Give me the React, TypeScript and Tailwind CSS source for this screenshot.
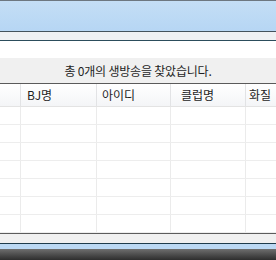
const columns = [
  { key: 'no', label: '', width: 'w-[21px]', pad: 'pl-[5px]' },
  { key: 'bj', label: 'BJ명', width: 'w-[76px]', pad: 'pl-[6px]' },
  { key: 'id', label: '아이디', width: 'w-[74px]', pad: 'pl-[5px]' },
  { key: 'club', label: '클럽명', width: 'w-[75px]', pad: 'pl-[10px]' },
  { key: 'quality', label: '화질', width: 'w-[60px]', pad: 'pl-[3px]' },
]

const rows = [0, 1, 2, 3, 4, 5, 6]

export default function App() {
  return (
    <div
      className="w-[276px] h-[260px] overflow-hidden flex flex-col bg-white text-[#1e1e1e]"
      style={{ fontFamily: '"Noto Sans CJK KR", "Noto Sans", sans-serif' }}
    >
      {/* window frame top */}
      <div className="h-px bg-[#6d7780]" />
      <div className="h-[30px] bg-gradient-to-b from-[#c4def5] to-[#b6d6f4]" />
      <div className="h-px bg-[#44525c]" />
      <div className="h-[8px] bg-[#eef0f3]" />
      <div className="h-px bg-[#2c4d5c]" />
      <div className="h-[17px] bg-white" />

      {/* status label */}
      <div className="h-[25px] bg-[#f0f0f0] flex items-center justify-center text-[12px] leading-none tracking-[-0.2px]">
        총 0개의 생방송을 찾았습니다.
      </div>

      {/* grid */}
      <div className="h-px bg-[#5a5a5a]" />
      <div className="h-[23px] flex bg-gradient-to-b from-white to-[#f4f5f7] border-b border-[#e3e3e3]">
        {columns.map((c) => (
          <div
            key={c.key}
            className={`${c.width} ${c.pad} shrink-0 flex items-center text-[12px] border-r border-[#e2e3e5]`}
          >
            {c.label}
          </div>
        ))}
      </div>
      {rows.map((r) => (
        <div key={r} className="h-[18px] flex border-b border-[#ededed]">
          {columns.map((c) => (
            <div key={c.key} className={`${c.width} shrink-0 border-r border-[#ebebeb]`} />
          ))}
        </div>
      ))}

      {/* window frame bottom */}
      <div className="h-px bg-[#5c5c5c]" />
      <div className="h-[9px] bg-[#f0f0f0]" />
      <div className="h-px bg-[#1f3c4c]" />
      <div className="h-[5px] bg-[#bcd9f4]" />
      <div className="flex-1 bg-gradient-to-b from-[#6f6f6f] to-[#2e2e2e]" />
    </div>
  )
}
